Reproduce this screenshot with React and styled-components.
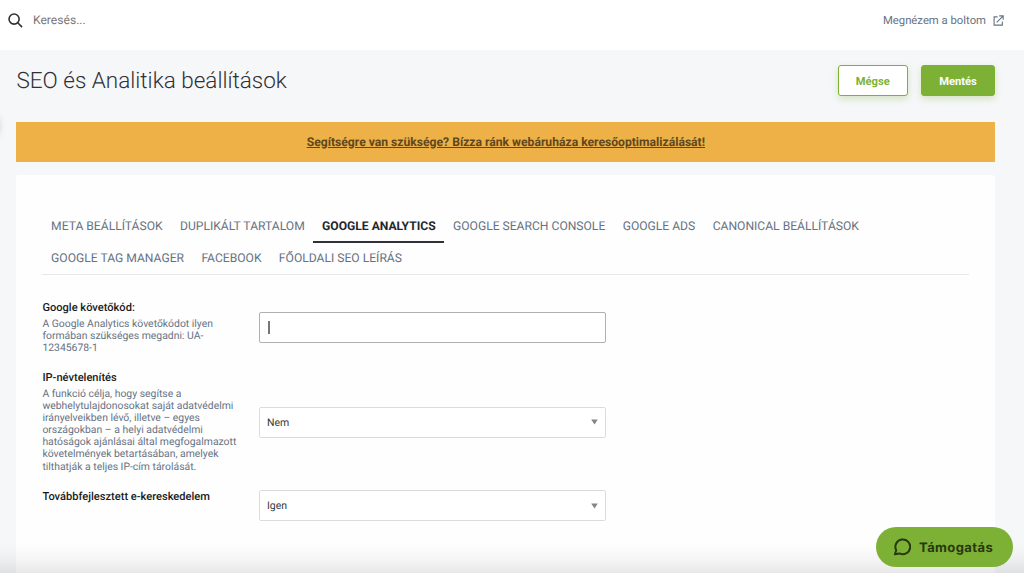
import React from 'react';
import styled, { createGlobalStyle } from 'styled-components';

const tabs = [
  'Meta beállítások',
  'Duplikált tartalom',
  'Google Analytics',
  'Google Search Console',
  'Google Ads',
  'Canonical beállítások',
  'Google Tag Manager',
  'Facebook',
  'Főoldali SEO leírás',
];

function SelectBox({ value }) {
  return (
    <Select type="button">
      {value}
      <Arrow viewBox="0 0 7 6">
        <path d="M0.2 0.4h6.6L3.5 5.5z" fill="#858585" />
      </Arrow>
    </Select>
  );
}

function App() {
  return (
    <>
      <GlobalStyle />
      <Page>
        <TopBar>
          <Search>
            <SearchIcon viewBox="0 0 16 16">
              <circle cx="6.5" cy="6.5" r="5.4" />
              <path d="M10.4 10.4L15 15" />
            </SearchIcon>
            Keresés...
          </Search>
          <ShopLink>
            Megnézem a boltom
            <ExternalIcon viewBox="0 0 12 12">
              <path d="M5 2H1.2v9h9V7.2M6.8 1h4.3v4.3M10.9 1.2L4 8" />
            </ExternalIcon>
          </ShopLink>
        </TopBar>
        <Content>
          <Header>
            <Title>SEO és Analitika beállítások</Title>
            <Buttons>
              <Button>Mégse</Button>
              <Button $primary>Mentés</Button>
            </Buttons>
          </Header>
          <Banner>
            <BannerLink>
              Segítségre van szüksége? Bízza ránk webáruháza keresőoptimalizálását!
            </BannerLink>
          </Banner>
          <Card>
            <Tabs>
              {tabs.map((tab) => (
                <Tab key={tab} $active={tab === 'Google Analytics'}>
                  {tab}
                </Tab>
              ))}
            </Tabs>
            <Row $height="70px">
              <Info>
                <Label>Google követőkód:</Label>
                <Help>
                  A Google Analytics követőkódot ilyen formában szükséges megadni: UA-12345678-1
                </Help>
              </Info>
              <Control $top="11px">
                <Field>
                  <Caret />
                </Field>
              </Control>
            </Row>
            <Row $height="119px">
              <Info>
                <Label>IP-névtelenítés</Label>
                <Help>
                  A funkció célja, hogy segítse a webhelytulajdonosokat saját adatvédelmi
                  irányelveikben lévő, illetve – egyes országokban – a helyi adatvédelmi
                  hatóságok ajánlásai által megfogalmazott követelmények betartásában, amelyek
                  tilthatják a teljes IP-cím tárolását.
                </Help>
              </Info>
              <Control $top="35.6px">
                <SelectBox value="Nem" />
              </Control>
            </Row>
            <Row $height="60px">
              <Info>
                <Label>Továbbfejlesztett e-kereskedelem</Label>
              </Info>
              <Control $top="0">
                <SelectBox value="Igen" />
              </Control>
            </Row>
          </Card>
        </Content>
        <EdgeShadow />
        <BottomFade />
        <Support>
          <ChatIcon viewBox="0 0 18 18">
            <path d="M1.9 16.2L3.2 12.2A7.4 7.4 0 1 1 6.4 15.4Z" />
          </ChatIcon>
          Támogatás
        </Support>
      </Page>
    </>
  );
}

const GlobalStyle = createGlobalStyle`
  * {
    box-sizing: border-box;
  }

  body {
    margin: 0;
    overflow: hidden;
    font-family: Roboto, sans-serif;
    text-rendering: geometricPrecision;
  }
`;

const Page = styled.div`
  position: relative;
  height: 573px;
  overflow: hidden;
  display: flex;
  flex-direction: column;
  background: #f6f7f9;
`;

const TopBar = styled.header`
  flex: none;
  height: 50px;
  padding: 0 20px 10px 8px;
  display: flex;
  align-items: center;
  justify-content: space-between;
  background: #fff;
`;

const Search = styled.div`
  display: flex;
  align-items: center;
  gap: 10px;
  font-size: 12.1px;
  color: #777;
`;

const SearchIcon = styled.svg`
  width: 15px;
  height: 15px;
  fill: none;
  stroke: #303136;
  stroke-width: 1.7;
`;

const ShopLink = styled.a`
  display: flex;
  align-items: center;
  gap: 7px;
  font-size: 11.3px;
  color: #677282;
`;

const ExternalIcon = styled.svg`
  width: 11px;
  height: 11px;
  margin-top: 1px;
  fill: none;
  stroke: #677282;
  stroke-width: 1.2;
`;

const Content = styled.main`
  flex: 1;
  min-height: 0;
  padding: 15px 28.7px 0 16.4px;
  display: flex;
  flex-direction: column;
`;

const Header = styled.div`
  display: flex;
  justify-content: space-between;
  height: 57px;
`;

const Title = styled.h1`
  margin: 0;
  font-size: 22.5px;
  font-weight: 300;
  line-height: 33px;
  color: #303136;
`;

const Buttons = styled.div`
  display: flex;
  gap: 13px;
`;

const Button = styled.button`
  width: ${(props) => (props.$primary ? '74.6px' : '70px')};
  height: 31px;
  padding: 1px 0 0;
  border: 1px solid #7db135;
  border-radius: 3px;
  background: ${(props) => (props.$primary ? '#7db135' : '#fff')};
  color: ${(props) => (props.$primary ? '#fff' : '#7db135')};
  box-shadow: 0 3px 7px rgba(125, 177, 53, 0.28);
  font-family: inherit;
  font-size: 11.2px;
  font-weight: 700;
  text-rendering: inherit;
`;

const Banner = styled.div`
  flex: none;
  height: 40px;
  display: flex;
  align-items: center;
  justify-content: center;
  background: #edb147;
`;

const BannerLink = styled.a`
  font-size: 12.15px;
  font-weight: 700;
  color: #5f471c;
  text-decoration: underline;
`;

const Card = styled.section`
  flex: 1;
  margin-top: 13px;
  padding: 36px 26px 0;
  border-radius: 3px 3px 0 0;
  background: #fefefe;
`;

const Tabs = styled.nav`
  display: flex;
  flex-wrap: wrap;
  align-content: flex-start;
  height: 64px;
  margin-bottom: 26px;
  border-bottom: 1px solid #e7e8ea;
`;

const Tab = styled.a`
  height: 32px;
  padding: 0 8.7px;
  border-bottom: 2px solid ${(props) => (props.$active ? '#303136' : 'transparent')};
  font-size: 12.12px;
  font-weight: ${(props) => (props.$active ? 700 : 400)};
  line-height: 31px;
  text-transform: uppercase;
  white-space: nowrap;
  color: ${(props) => (props.$active ? '#25262b' : '#677282')};
`;

const Row = styled.div`
  display: flex;
  height: ${(props) => props.$height};
`;

const Info = styled.div`
  width: 217px;
  padding-right: 16px;
`;

const Label = styled.div`
  font-size: 11.1px;
  font-weight: 500;
  line-height: 13px;
  white-space: nowrap;
  color: #1a1a1a;
`;

const Help = styled.div`
  margin-top: 4px;
  font-size: 10.4px;
  line-height: 12.1px;
  color: #677282;
`;

const Control = styled.div`
  width: 346.2px;
  padding-top: ${(props) => props.$top};
`;

const Field = styled.div`
  display: flex;
  align-items: center;
  height: 31px;
  padding: 0 8px;
  border: 1px solid #b0b0b2;
  border-radius: 2px;
  background: #fff;
`;

const Caret = styled.span`
  width: 1.5px;
  height: 13px;
  margin-bottom: 1px;
  background: #777;
`;

const Select = styled.button`
  display: flex;
  align-items: center;
  justify-content: space-between;
  width: 100%;
  height: 31px;
  padding: 0 6.5px;
  border: 1px solid #dcdcdc;
  border-radius: 2px;
  background: #fff;
  font-family: inherit;
  font-size: 10.5px;
  color: #38393c;
  text-rendering: inherit;
`;

const Arrow = styled.svg`
  width: 7px;
  height: 6px;
`;

const EdgeShadow = styled.div`
  position: absolute;
  left: -26px;
  top: 114px;
  width: 24px;
  height: 24px;
  border-radius: 50%;
  box-shadow: 0 0 8px rgba(0, 0, 0, 0.25);
`;

const BottomFade = styled.div`
  position: absolute;
  left: 0;
  right: 0;
  bottom: 0;
  height: 30px;
  background: linear-gradient(rgba(0, 0, 0, 0), rgba(0, 0, 0, 0.03) 50%, rgba(0, 0, 0, 0.09));
`;

const Support = styled.button`
  position: absolute;
  right: 11px;
  bottom: 6px;
  display: flex;
  align-items: center;
  gap: 7px;
  width: 137px;
  height: 40px;
  padding: 1px 0 0 18px;
  border: 0;
  border-radius: 20px;
  background: #7db135;
  color: #28380f;
  font-family: Inter, sans-serif;
  font-size: 13px;
  font-weight: 700;
  letter-spacing: 0.4px;
  text-rendering: inherit;
`;

const ChatIcon = styled.svg`
  width: 18px;
  height: 18px;
  margin: -1px 1px 0 -1px;
  fill: none;
  stroke: #28380f;
  stroke-width: 2;
  stroke-linejoin: round;
`;

export default App;
